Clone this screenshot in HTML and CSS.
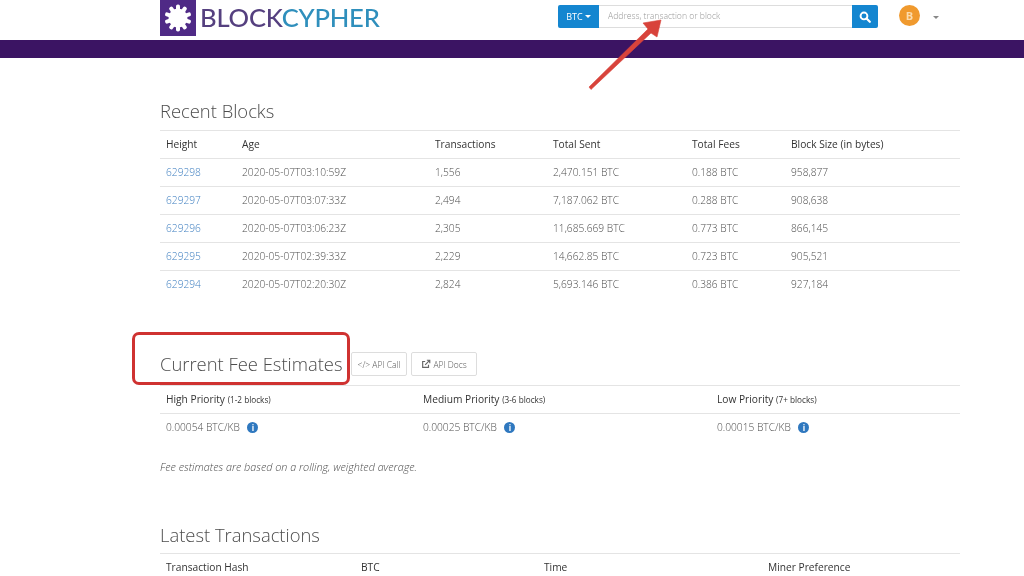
FILE: index.html
```html
<!DOCTYPE html>
<html lang="en">
<head>
    <meta charset="UTF-8">
    <meta name="viewport" content="width=device-width, initial-scale=1.0">
    <title>BlockCypher</title>
    <link rel="stylesheet" href="styles.css">
</head>
<body>
    <header class="topbar">
        <div class="brand">
            <span class="brand-mark">
                <svg viewBox="0 0 36 36" width="36" height="36">
                    <rect width="36" height="36" fill="#4f2a86"/>
                    <g fill="#fff">
                        <circle cx="18" cy="18" r="9.5"/>
                        <rect x="16" y="4.5" width="4" height="6" rx="1.8"/>
                        <rect x="16" y="4.5" width="4" height="6" rx="1.8" transform="rotate(36 18 18)"/>
                        <rect x="16" y="4.5" width="4" height="6" rx="1.8" transform="rotate(72 18 18)"/>
                        <rect x="16" y="4.5" width="4" height="6" rx="1.8" transform="rotate(108 18 18)"/>
                        <rect x="16" y="4.5" width="4" height="6" rx="1.8" transform="rotate(144 18 18)"/>
                        <rect x="16" y="4.5" width="4" height="6" rx="1.8" transform="rotate(180 18 18)"/>
                        <rect x="16" y="4.5" width="4" height="6" rx="1.8" transform="rotate(216 18 18)"/>
                        <rect x="16" y="4.5" width="4" height="6" rx="1.8" transform="rotate(252 18 18)"/>
                        <rect x="16" y="4.5" width="4" height="6" rx="1.8" transform="rotate(288 18 18)"/>
                        <rect x="16" y="4.5" width="4" height="6" rx="1.8" transform="rotate(324 18 18)"/>
                    </g>
                </svg>
            </span>
            <span class="brand-name"><span class="brand-block">BLOCK</span><span class="brand-cypher">CYPHER</span></span>
        </div>
        <form class="search">
            <span class="coin-select">BTC<i class="caret"></i></span>
            <span class="search-input">Address, transaction or block</span>
            <span class="search-btn">
                <svg viewBox="0 0 14 14" width="12" height="12">
                    <circle cx="5.8" cy="5.8" r="4" fill="none" stroke="#fff" stroke-width="2.2"/>
                    <path d="M8.8 8.8L12.6 12.6" stroke="#fff" stroke-width="2.6" stroke-linecap="round"/>
                </svg>
            </span>
        </form>
        <span class="coin-badge">B</span>
        <i class="caret caret-grey"></i>
    </header>
    <div class="band"></div>

    <main class="container">
        <section class="blocks">
            <h2>Recent Blocks</h2>
            <table class="grid">
                <colgroup>
                    <col class="c-76"><col class="c-193"><col class="c-118"><col class="c-139"><col class="c-99"><col>
                </colgroup>
                <thead>
                    <tr><th>Height</th><th>Age</th><th>Transactions</th><th>Total Sent</th><th>Total Fees</th><th>Block Size (in bytes)</th></tr>
                </thead>
                <tbody>
                    <tr><td><a href="#">629298</a></td><td>2020-05-07T03:10:59Z</td><td>1,556</td><td>2,470.151 BTC</td><td>0.188 BTC</td><td>958,877</td></tr>
                    <tr><td><a href="#">629297</a></td><td>2020-05-07T03:07:33Z</td><td>2,494</td><td>7,187.062 BTC</td><td>0.288 BTC</td><td>908,638</td></tr>
                    <tr><td><a href="#">629296</a></td><td>2020-05-07T03:06:23Z</td><td>2,305</td><td>11,685.669 BTC</td><td>0.773 BTC</td><td>866,145</td></tr>
                    <tr><td><a href="#">629295</a></td><td>2020-05-07T02:39:33Z</td><td>2,229</td><td>14,662.85 BTC</td><td>0.723 BTC</td><td>905,521</td></tr>
                    <tr><td><a href="#">629294</a></td><td>2020-05-07T02:20:30Z</td><td>2,824</td><td>5,693.146 BTC</td><td>0.386 BTC</td><td>927,184</td></tr>
                </tbody>
            </table>
        </section>

        <section class="fees">
            <div class="title-row">
                <h2>Current Fee Estimates</h2>
                <span class="btn">&lt;/&gt; API Call</span>
                <span class="btn btn-docs">
                    <svg viewBox="0 0 12 12" width="10" height="10">
                        <path d="M9 7v3H2V3h3" fill="none" stroke="#666" stroke-width="1.4"/>
                        <path d="M5 7l5-5M7 1.5h3.5V5" fill="none" stroke="#666" stroke-width="1.4"/>
                    </svg>
                    API Docs
                </span>
            </div>
            <table class="grid">
                <colgroup>
                    <col class="c-257"><col class="c-294"><col>
                </colgroup>
                <thead>
                    <tr>
                        <th>High Priority <small>(1-2 blocks)</small></th>
                        <th>Medium Priority <small>(3-6 blocks)</small></th>
                        <th>Low Priority <small>(7+ blocks)</small></th>
                    </tr>
                </thead>
                <tbody>
                    <tr>
                        <td>0.00054 BTC/KB <i class="info">i</i></td>
                        <td>0.00025 BTC/KB <i class="info">i</i></td>
                        <td>0.00015 BTC/KB <i class="info">i</i></td>
                    </tr>
                </tbody>
            </table>
            <p class="note">Fee estimates are based on a rolling, weighted average.</p>
        </section>

        <section class="latest">
            <h2>Latest Transactions</h2>
            <table class="grid">
                <colgroup>
                    <col class="c-195"><col class="c-183"><col class="c-224"><col>
                </colgroup>
                <thead>
                    <tr><th>Transaction Hash</th><th>BTC</th><th>Time</th><th>Miner Preference</th></tr>
                </thead>
            </table>
        </section>
    </main>

    <!-- screenshot annotations -->
    <div class="callout"></div>
    <svg class="arrow" viewBox="0 0 90 80" width="90" height="80">
        <path d="M3 75L5 77.5L65 21L71 25L75 8L57 11L62 17Z" fill="#d8433b" stroke="#d8433b" stroke-width="0.6" stroke-linejoin="round"/>
    </svg>
</body>
</html>
```

FILE: styles.css
```css
html, body {
    height: 576px;
    overflow: hidden;
}

body {
    margin: 0;
    font-family: 'Open Sans', sans-serif;
    font-weight: 300;
    font-size: 10.2px;
    color: #4d4d4d;
    background: #fff;
    filter: blur(0.35px);
}

.topbar {
    height: 40px;
    display: flex;
    align-items: flex-start;
    padding-left: 160px;
    box-sizing: border-box;
}

.brand {
    display: flex;
    align-items: center;
    width: 398px;
    height: 35px;
}

.brand-mark {
    display: block;
    height: 35px;
    margin-right: 4px;
}

.brand-name {
    font-family: 'Lato', sans-serif;
    font-weight: 500;
    font-size: 25.6px;
    letter-spacing: -0.2px;
    padding-bottom: 2px;
}

.brand-block {
    color: #55407f;
}

.brand-cypher {
    color: #2f8fbc;
}

.search {
    display: flex;
    width: 320px;
    height: 23px;
    margin-top: 5px;
}

.coin-select {
    width: 41px;
    background: #1486d0;
    color: #fff;
    border-radius: 2px 0 0 2px;
    display: flex;
    align-items: center;
    justify-content: center;
    font-size: 9px;
    font-weight: 400;
}

.search-input {
    flex: 1;
    border: 1px solid #ddd;
    border-left: none;
    border-right: none;
    padding-left: 9px;
    line-height: 21px;
    font-size: 8.6px;
    color: #999;
}

.search-btn {
    width: 26px;
    background: #1486d0;
    border-radius: 0 2px 2px 0;
    display: flex;
    align-items: center;
    justify-content: center;
}

.caret {
    display: inline-block;
    width: 0;
    height: 0;
    margin-left: 2px;
    border-left: 3px solid transparent;
    border-right: 3px solid transparent;
    border-top: 3px solid #fff;
}

.caret-grey {
    border-top-color: #888;
    margin: 16px 0 0 13px;
}

.coin-badge {
    width: 21px;
    height: 21px;
    margin: 5px 0 0 21px;
    border-radius: 50%;
    background: #f09a2e;
    color: #fbdcae;
    font-size: 11px;
    font-weight: 700;
    line-height: 21px;
    text-align: center;
}

.band {
    height: 18px;
    background: #3b1463;
}

.container {
    width: 800px;
    margin-left: 160px;
}

h2 {
    margin: 0;
    font-size: 18.4px;
    font-weight: 300;
    line-height: 28px;
    color: #4d4d4d;
}

.blocks {
    padding-top: 39px;
}

.blocks h2 {
    margin-bottom: 5px;
}

.grid {
    width: 100%;
    border-collapse: collapse;
    table-layout: fixed;
}

.grid th,
.grid td {
    height: 25px;
    padding: 0 6px 2px;
    border-top: 1px solid #e4e4e4;
    text-align: left;
    font-weight: 300;
    white-space: nowrap;
}

.grid th {
    color: #333;
    font-weight: 400;
}

.grid small {
    font-size: 8.2px;
}

.grid a {
    color: #3f7fc0;
    text-decoration: none;
}

.c-76 { width: 76px; }
.c-193 { width: 193px; }
.c-118 { width: 118px; }
.c-139 { width: 139px; }
.c-99 { width: 99px; }
.c-257 { width: 257px; }
.c-294 { width: 294px; }
.c-195 { width: 195px; }
.c-183 { width: 183px; }
.c-224 { width: 224px; }

.fees {
    padding-top: 51px;
}

.title-row {
    display: flex;
    align-items: center;
    height: 30px;
    padding-bottom: 6px;
}

.title-row h2 {
    margin-right: 8px;
}

.btn {
    display: inline-flex;
    align-items: center;
    gap: 2px;
    height: 22px;
    padding: 0 6px;
    margin-right: 4px;
    border: 1px solid #ddd;
    border-radius: 2px;
    font-size: 8.5px;
    color: #555;
}

.btn-docs {
    padding: 0 9px;
}

.info {
    display: inline-block;
    width: 11px;
    height: 11px;
    margin-left: 5px;
    border-radius: 50%;
    background: #2f78bf;
    color: #fff;
    font-size: 8px;
    font-style: normal;
    font-weight: 700;
    line-height: 11px;
    text-align: center;
}

.note {
    margin: 18px 0 0;
    font-size: 10.8px;
    font-style: italic;
    color: #4d4d4d;
}

.latest {
    padding-top: 47px;
}

.latest h2 {
    margin-bottom: 4px;
}

.callout {
    position: absolute;
    left: 132px;
    top: 332px;
    width: 212px;
    height: 47px;
    border: 3px solid #cf3231;
    border-radius: 7px;
}

.arrow {
    position: absolute;
    left: 586px;
    top: 12px;
}
```
